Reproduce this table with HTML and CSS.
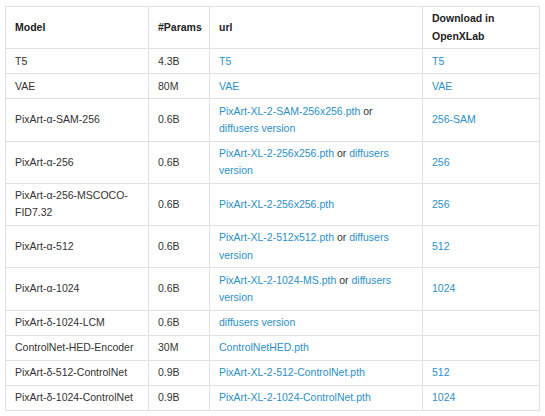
FILE: index.html
```html
<!DOCTYPE html>
<html>
<head>
<meta charset="utf-8">
<link rel="stylesheet" href="styles.css">
</head>
<body>
<table class="models">
  <colgroup>
    <col class="c-model">
    <col class="c-params">
    <col class="c-url">
    <col class="c-dl">
  </colgroup>
  <thead>
    <tr><th>Model</th><th>#Params</th><th>url</th><th>Download in OpenXLab</th></tr>
  </thead>
  <tbody>
    <tr><td>T5</td><td>4.3B</td><td><a>T5</a></td><td><a>T5</a></td></tr>
    <tr><td>VAE</td><td>80M</td><td><a>VAE</a></td><td><a>VAE</a></td></tr>
    <tr><td>PixArt-α-SAM-256</td><td>0.6B</td><td><a>PixArt-XL-2-SAM-256x256.pth</a> or <a>diffusers version</a></td><td><a>256-SAM</a></td></tr>
    <tr><td>PixArt-α-256</td><td>0.6B</td><td><a>PixArt-XL-2-256x256.pth</a> or <a>diffusers version</a></td><td><a>256</a></td></tr>
    <tr><td>PixArt-α-256-MSCOCO-FID7.32</td><td>0.6B</td><td><a>PixArt-XL-2-256x256.pth</a></td><td><a>256</a></td></tr>
    <tr><td>PixArt-α-512</td><td>0.6B</td><td><a>PixArt-XL-2-512x512.pth</a> or <a>diffusers version</a></td><td><a>512</a></td></tr>
    <tr><td>PixArt-α-1024</td><td>0.6B</td><td><a>PixArt-XL-2-1024-MS.pth</a> or <a>diffusers version</a></td><td><a>1024</a></td></tr>
    <tr><td>PixArt-δ-1024-LCM</td><td>0.6B</td><td><a>diffusers version</a></td><td></td></tr>
    <tr><td>ControlNet-HED-Encoder</td><td>30M</td><td><a>ControlNetHED.pth</a></td><td></td></tr>
    <tr><td>PixArt-δ-512-ControlNet</td><td>0.9B</td><td><a>PixArt-XL-2-512-ControlNet.pth</a></td><td><a>512</a></td></tr>
    <tr><td>PixArt-δ-1024-ControlNet</td><td>0.9B</td><td><a>PixArt-XL-2-1024-ControlNet.pth</a></td><td><a>1024</a></td></tr>
  </tbody>
</table>
</body>
</html>
```
FILE: styles.css
```css
html, body {
  margin: 0;
  background: #ffffff;
}
body {
  padding: 6px 0 0 5px;
  font-family: "Liberation Sans", Arial, sans-serif;
  font-size: 10.5px;
  line-height: 17.3px;
  color: #333333;
}
.models {
  border-collapse: collapse;
  table-layout: fixed;
  width: 534px;
}
.c-model { width: 143px; }
.c-params { width: 61px; }
.c-url { width: 213px; }
.c-dl { width: 117px; }
.models th,
.models td {
  border: 1px solid #e1e1e1;
  padding: 3.35px 9px;
  text-align: left;
  vertical-align: middle;
}
.models th {
  font-weight: bold;
  color: #222222;
}
.models a {
  color: #2b8fcc;
  text-decoration: none;
}
```
